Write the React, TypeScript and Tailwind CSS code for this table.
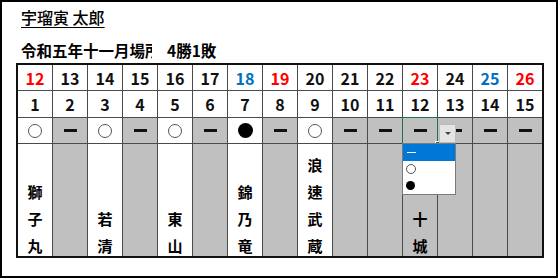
import React from "react";

type Day = {
  date: number;
  tone?: "red" | "blue";
  mark: "○" | "●" | "ー";
  name?: string;
};

const days: Day[] = [
  { date: 12, tone: "red", mark: "○", name: "獅子丸" },
  { date: 13, mark: "ー" },
  { date: 14, mark: "○", name: "若清" },
  { date: 15, mark: "ー" },
  { date: 16, mark: "○", name: "東山" },
  { date: 17, mark: "ー" },
  { date: 18, tone: "blue", mark: "●", name: "錦乃竜" },
  { date: 19, tone: "red", mark: "ー" },
  { date: 20, mark: "○", name: "浪速武蔵" },
  { date: 21, mark: "ー" },
  { date: 22, mark: "ー" },
  { date: 23, tone: "red", mark: "ー", name: "十城" },
  { date: 24, mark: "ー" },
  { date: 25, tone: "blue", mark: "ー" },
  { date: 26, tone: "red", mark: "ー" },
];

const font = { fontFamily: '"Noto Sans CJK JP", "Noto Sans CJK SC", sans-serif' };

function Mark({ mark }: { mark: Day["mark"] }) {
  if (mark === "ー") return <span className="block w-[13px] h-[3px] bg-[#111]" />;
  if (mark === "●") return <span className="block w-[15px] h-[15px] rounded-full bg-black" />;
  return <span className="block w-[14px] h-[14px] rounded-full border border-[#555] bg-white" />;
}

export default function App() {
  return (
    <div className="w-[558px] h-[278px] border-2 border-black bg-white text-black" style={font}>
      <div className="pl-[19px] pt-[5px]">
        <div className="h-[20px] leading-[20px] text-[16px] font-medium">
          <span className="underline underline-offset-[3px] decoration-1">宇瑠寅 太郎</span>
        </div>
        <div className="mt-[13px] h-[20px] leading-[20px] text-[15.5px] font-bold flex">
          <span className="inline-block w-[131px] overflow-hidden whitespace-nowrap">令和五年十一月場所</span>
          <span className="ml-[15px]">4勝1敗</span>
        </div>
      </div>

      <div className="relative ml-[14px] mt-[3px] w-fit">
        <div className="grid grid-cols-[repeat(15,34px)] grid-rows-[25px_26px_25px_112px] gap-px bg-[#4a4a4a] border-2 border-[#111]">
          {days.map((d) => (
            <div
              key={`d${d.date}`}
              className={`bg-white flex items-center justify-center text-[16px] font-bold ${
                d.tone === "red" ? "text-[#ff0000]" : d.tone === "blue" ? "text-[#0070c0]" : "text-[#111]"
              }`}
            >
              {d.date}
            </div>
          ))}
          {days.map((_, i) => (
            <div key={`n${i}`} className="bg-white flex items-center justify-center text-[16px] font-bold text-[#111]">
              {i + 1}
            </div>
          ))}
          {days.map((d, i) => (
            <div
              key={`m${i}`}
              className={`flex items-center justify-center ${d.mark === "ー" ? "bg-[#c0c0c0]" : "bg-white"}`}
            >
              <Mark mark={d.mark} />
            </div>
          ))}
          {days.map((d, i) => (
            <div
              key={`s${i}`}
              className={`flex flex-col items-center justify-end text-[15px] font-bold text-black [font-family:'Noto_Sans_CJK_TC','Noto_Sans_CJK_JP',sans-serif] ${
                d.mark === "ー" ? "bg-[#c0c0c0]" : "bg-white"
              }`}
            >
              {d.name?.split("").map((c, j) => (
                <span key={j} className="h-[27px] leading-[33px]">
                  {c}
                </span>
              ))}
            </div>
          ))}
        </div>

        {/* active cell with its list picker */}
        <div className="absolute left-[386px] top-[54px] w-[36px] h-[27px] border border-[#217346]">
          <span className="absolute -right-[3px] -bottom-[3px] w-[5px] h-[5px] bg-[#217346] border border-white" />
        </div>
        <div className="absolute left-[423px] top-[61px] w-[17px] h-[19px] bg-[#e4e4e4] border border-[#bcbcbc] flex items-center justify-center">
          <span className="w-0 h-0 border-l-[3px] border-r-[3px] border-t-[3px] border-l-transparent border-r-transparent border-t-[#444]" />
        </div>
        <div className="absolute left-[386px] top-[80px] w-[54px] h-[52px] bg-white border border-[#7a7a7a] flex flex-col">
          <div className="h-[18px] bg-[#0078d7] flex items-center pl-[4px]">
            <span className="block w-[9px] h-[1px] bg-white" />
          </div>
          <div className="h-[17px] flex items-center pl-[3px]">
            <span className="block w-[10px] h-[10px] rounded-full border border-[#555]" />
          </div>
          <div className="h-[17px] flex items-center pl-[3px]">
            <span className="block w-[9px] h-[9px] rounded-full bg-black" />
          </div>
        </div>
      </div>
    </div>
  );
}
